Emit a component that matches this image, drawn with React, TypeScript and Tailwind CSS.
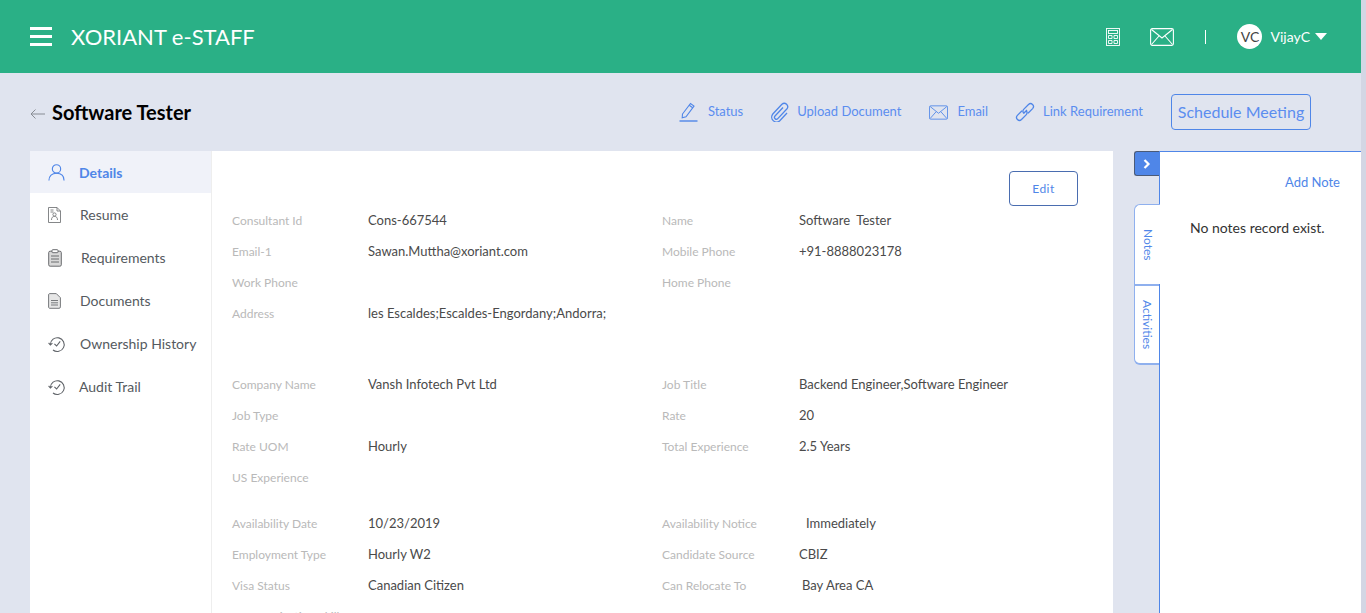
import React from 'react';

type Field = { label: string; value?: string; pad?: string };

const blocks: { rows: [Field, Field?][]; cls: string }[] = [
  {
    cls: 'h-[164px]',
    rows: [
      [{ label: 'Consultant Id', value: 'Cons-667544' }, { label: 'Name', value: 'Software  Tester' }],
      [{ label: 'Email-1', value: 'Sawan.Muttha@xoriant.com' }, { label: 'Mobile Phone', value: '+91-8888023178' }],
      [{ label: 'Work Phone' }, { label: 'Home Phone' }],
      [{ label: 'Address', value: 'les Escaldes;Escaldes-Engordany;Andorra;' }],
    ],
  },
  {
    cls: 'h-[139px]',
    rows: [
      [{ label: 'Company Name', value: 'Vansh Infotech Pvt Ltd' }, { label: 'Job Title', value: 'Backend Engineer,Software Engineer' }],
      [{ label: 'Job Type' }, { label: 'Rate', value: '20' }],
      [{ label: 'Rate UOM', value: 'Hourly' }, { label: 'Total Experience', value: '2.5 Years' }],
      [{ label: 'US Experience' }],
    ],
  },
  {
    cls: '',
    rows: [
      [{ label: 'Availability Date', value: '10/23/2019' }, { label: 'Availability Notice', value: 'Immediately', pad: 'pl-[7px]' }],
      [{ label: 'Employment Type', value: 'Hourly W2' }, { label: 'Candidate Source', value: 'CBIZ' }],
      [{ label: 'Visa Status', value: 'Canadian Citizen' }, { label: 'Can Relocate To', value: 'Bay Area CA', pad: 'pl-[3px]' }],
      [{ label: 'Communication Skills' }],
    ],
  },
];

function MailIcon({ className }: { className: string }) {
  return (
    <svg viewBox="0 0 24 18" fill="none" stroke="currentColor" strokeWidth="1.1" className={className}>
      <rect x="0.6" y="0.6" width="22.8" height="16.8" rx="1.6" />
      <path d="M1.5 1.5 12 10 22.5 1.5M1.5 16.5 9 8M22.5 16.5 15 8" />
    </svg>
  );
}

function HistoryIcon() {
  return (
    <svg viewBox="0 0 18 18" fill="none" stroke="#5f6368" strokeWidth="1.1" className="w-[18px] h-[18px]">
      <path d="M2.4 9.5A6.9 6.9 0 1 1 5 15" />
      <path d="M0.6 7.8 2.4 10l2-1.9" />
      <path d="M6.4 8.8 8.6 11l3.6-4.6" />
    </svg>
  );
}

const sideIcons: Record<string, React.ReactNode> = {
  Resume: (
    <svg viewBox="0 0 13 16" fill="none" stroke="#77797c" strokeWidth="0.9" className="w-[13px] h-[16px]">
      <path d="M0.5 0.5h8.5l3.5 3.5v11.5h-12z" />
      <path d="M9 0.5v3.5h3.5M2.5 3h3M2.5 5h3" />
      <circle cx="6.5" cy="7.5" r="1.6" />
      <path d="M3.5 13c0-2.5 1.2-3.6 3-3.6s3 1.1 3 3.6" />
    </svg>
  ),
  Requirements: (
    <svg viewBox="0 0 14 18" fill="#d9d9d9" stroke="#6a6c6f" strokeWidth="1" className="w-[14px] h-[18px]">
      <rect x="0.7" y="2.2" width="12.6" height="15" rx="1.4" />
      <rect x="4" y="0.7" width="6" height="3" rx="0.8" fill="#ffffff" />
      <path d="M3 7h8M3 10h8M3 13h8" />
    </svg>
  ),
  Documents: (
    <svg viewBox="0 0 13 16" fill="#e6e6e6" stroke="#77797c" strokeWidth="1" className="w-[13px] h-[16px]">
      <path d="M1.5 0.6h6.8l4.1 4.1v9.2a1.4 1.4 0 0 1-1.4 1.4H1.5A1.4 1.4 0 0 1 0.6 14V2a1.4 1.4 0 0 1 0.9-1.4z" />
      <path d="M3 7.5h7M3 9.8h7M3 12h7" fill="none" />
    </svg>
  ),
  'Ownership History': <HistoryIcon />,
  'Audit Trail': <HistoryIcon />,
};

const sideItems: [string, string][] = [
  ['Resume', 'gap-[19px] pl-[18px]'],
  ['Requirements', 'gap-[19px] pl-[18px]'],
  ['Documents', 'gap-[19px] pl-[18px]'],
  ['Ownership History', 'gap-[14px] pl-[18px]'],
  ['Audit Trail', 'gap-[13px] pl-[18px]'],
];

function Sidebar() {
  return (
    <aside className="w-[182px] shrink-0 border-r border-[#eeeeee]">
      <div className="h-[42px] bg-[#f0f2f9] flex items-center gap-[14px] pl-[18px] text-[#4f86e8] font-bold text-[14px]">
        <svg viewBox="0 0 18 18" fill="none" stroke="#4f86e8" strokeWidth="1.2" className="w-[17px] h-[17px]">
          <circle cx="9" cy="5.2" r="4.4" />
          <path d="M1 17.4c0-4.8 3.2-7.6 8-7.6s8 2.8 8 7.6" />
        </svg>
        Details
      </div>
      {sideItems.map(([name, cls]) => (
        <div key={name} className={`h-[43px] flex items-center text-[14px] text-[#555a60] ${cls}`}>
          {sideIcons[name]}
          <span>{name}</span>
        </div>
      ))}
    </aside>
  );
}

function Details() {
  return (
    <div className="relative flex-1 pl-[20px] pt-[54px]">
      <button className="absolute right-[35px] top-[20px] w-[69px] h-[35px] border border-[#4a6db0] rounded text-[12px] tracking-[0.5px] text-[#4f86e8] bg-white">
        Edit
      </button>
      {blocks.map((block, i) => (
        <div key={i} className={block.cls}>
          {block.rows.map((row, j) => (
            <div key={j} className="h-[31px] flex items-center">
              <div className="w-[136px] text-[12px] text-[#b9b9b9]">{row[0].label}</div>
              <div className="w-[294px] text-[13px] text-[#4a4a4a]">{row[0].value}</div>
              {row[1] && (
                <>
                  <div className="w-[137px] text-[12px] text-[#b9b9b9]">{row[1].label}</div>
                  <div className={`text-[13px] text-[#4a4a4a] whitespace-pre ${row[1].pad ?? ''}`}>{row[1].value}</div>
                </>
              )}
            </div>
          ))}
        </div>
      ))}
    </div>
  );
}

function NotesPanel() {
  return (
    <div className="w-[228px] ml-[21px] shrink-0 flex">
      <div className="w-[25px] shrink-0 flex flex-col">
        <div className="h-[25px] bg-[#4f86e8] rounded-l-[3px] border border-r-0 border-[#4a5a78] flex items-center justify-center">
          <svg viewBox="0 0 8 10" className="w-[8px] h-[10px]" fill="none" stroke="#ffffff" strokeWidth="2.2">
            <path d="M1.5 1 5.5 5 1.5 9" />
          </svg>
        </div>
        <div className="mt-[28px] h-[80px] w-[26px] z-10 bg-white rounded-tl-[6px] border-l border-t border-[#8fb0ee] flex items-center justify-center">
          <span className="[writing-mode:vertical-rl] text-[12px] text-[#4f86e8]">Notes</span>
        </div>
        <div className="h-[81px] rounded-bl-[6px] bg-white border border-r-0 border-t-2 border-b-2 border-[#8fb0ee] flex items-center justify-center">
          <span className="[writing-mode:vertical-rl] text-[12px] text-[#4f86e8]">Activities</span>
        </div>
      </div>
      <div className="flex-1 bg-white border-l border-t border-[#4f86e8] pt-[21px]">
        <div className="text-right pr-[22px] text-[13px] text-[#4f86e8]">Add Note</div>
        <div className="mt-[24px] pl-[30px] text-[14px] text-[#333333]">No notes record exist.</div>
      </div>
    </div>
  );
}

export default function App() {
  return (
    <div className="h-[613px] overflow-hidden flex bg-[#e0e4ef] font-['Lato',sans-serif]">
      <div className="w-[1361px] shrink-0 flex flex-col">
        <header className="h-[73px] shrink-0 bg-[#2ab086] flex items-center pl-[30px] text-white">
          <div className="w-[22px] flex flex-col gap-[5px]">
            <span className="h-[3px] bg-white" />
            <span className="h-[3px] bg-white" />
            <span className="h-[3px] bg-white" />
          </div>
          <span className="ml-[19px] text-[22px]">XORIANT e-STAFF</span>
          <div className="ml-auto flex items-center">
            <svg viewBox="0 0 14 18" fill="none" stroke="#ffffff" strokeWidth="0.9" className="w-[14px] h-[18px]">
              <rect x="0.5" y="0.5" width="13" height="17" />
              <rect x="2.5" y="2.5" width="9" height="3" />
              <path d="M2.5 7.5h3.5v3h-3.5zM8 7.5h3.5v3H8zM2.5 12.5h3.5v3h-3.5zM8 12.5h3.5v3H8z" />
            </svg>
            <MailIcon className="ml-[30px] w-[24px] h-[18px]" />
            <span className="ml-[31px] w-px h-[14px] bg-white" />
            <span className="ml-[31px] w-[25px] h-[25px] rounded-full bg-white text-[#444] text-[14px] flex items-center justify-center">VC</span>
            <span className="ml-[8px] text-[14px]">VijayC</span>
            <span className="ml-[5px] w-0 h-0 border-l-[6px] border-r-[6px] border-t-[7px] border-l-transparent border-r-transparent border-t-white" />
            <span className="w-[34px]" />
          </div>
        </header>

        <div className="h-[78px] shrink-0 flex items-center pl-[30px] pr-[50px]">
          <svg viewBox="0 0 15 10" fill="none" stroke="#888c94" strokeWidth="1" className="w-[15px] h-[10px] mt-[3px]">
            <path d="M15 5H1M5.5 0.5 1 5l4.5 4.5" />
          </svg>
          <h1 className="ml-[7px] text-[20px] font-bold text-black">Software Tester</h1>
          <div className="ml-auto flex items-center text-[13px] text-[#5b8def]">
            <svg viewBox="0 0 20 20" fill="none" stroke="#4f86e8" strokeWidth="1.1" className="w-[20px] h-[20px]">
              <path d="M3.5 12 11.5 1.5l3.5 2.6L7 14.8l-3.8 1z" />
              <path d="M10.2 3.2 13.7 5.8" />
              <path d="M0.5 19h18" strokeWidth="1.4" />
            </svg>
            <span className="ml-[9px]">Status</span>
            <svg viewBox="0 0 20 20" fill="none" stroke="#4f86e8" strokeWidth="1.3" className="ml-[27px] w-[20px] h-[20px]">
              <path d="M13 5.5 5 14a1.9 1.9 0 0 0 2.8 2.6L16.8 7a3.4 3.4 0 0 0-4.9-4.7L2.8 12a4.9 4.9 0 0 0 7 6.8L17 11" />
            </svg>
            <span className="ml-[7px]">Upload Document</span>
            <MailIcon className="ml-[28px] w-[19px] h-[15px] text-[#4f86e8]" />
            <span className="ml-[9px]">Email</span>
            <svg viewBox="0 0 20 20" fill="none" stroke="#4f86e8" strokeWidth="1.3" className="ml-[27px] w-[20px] h-[20px]">
              <path d="M8.5 11.5 12 8M7 8.8l-4.6 4.6a2.9 2.9 0 0 0 4.1 4.1l4.6-4.6a2.9 2.9 0 0 0 0-4.1" />
              <path d="M13 11.2l4.6-4.6a2.9 2.9 0 0 0-4.1-4.1L8.9 7.1a2.9 2.9 0 0 0 0 4.1" />
            </svg>
            <span className="ml-[8px]">Link Requirement</span>
            <button className="ml-[28px] w-[140px] h-[36px] rounded border border-[#4f86e8] text-[16px] text-[#5b8def]">
              Schedule Meeting
            </button>
          </div>
        </div>

        <div className="flex-1 flex pl-[30px]">
          <div className="w-[1083px] shrink-0 flex bg-white">
            <Sidebar />
            <Details />
          </div>
          <NotesPanel />
        </div>
      </div>
      <div className="flex-1 bg-[#d3d6e4]" />
    </div>
  );
}
